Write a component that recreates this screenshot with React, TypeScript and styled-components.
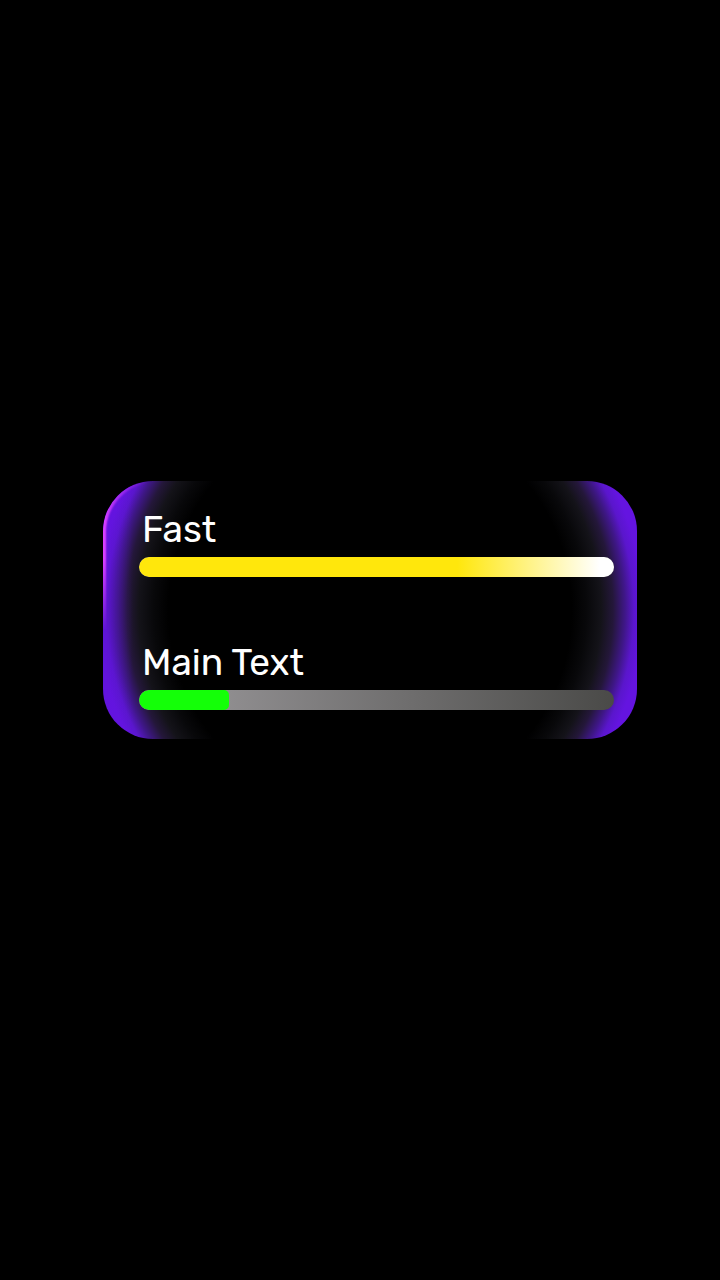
import React from 'react';
import styled, { createGlobalStyle } from 'styled-components';

const GlobalStyle = createGlobalStyle`
  * {
    box-sizing: border-box;
  }

  body {
    margin: 0;
    background-color: #000;
    font-family: Rubik, Roboto, 'Liberation Sans', sans-serif;
  }
`;

const Page = styled.main`
  min-height: 100vh;
  display: flex;
  align-items: center;
  padding: 0 83px 60px 103px;
`;

const Panel = styled.section`
  position: relative;
  flex: 1;
  display: flex;
  flex-direction: column;
  gap: 64px;
  padding: 27px 23px 29px 36px;
  border-radius: 50px;
  background:
    linear-gradient(to right, rgba(96, 20, 220, 0.5), rgba(96, 20, 220, 0) 30px),
    radial-gradient(
      circle farthest-corner,
      #000 68%,
      #08080a 73%,
      #141319 78%,
      #24173a 82%,
      #3f1788 86%,
      #5a16cc 89%,
      #6414e0 92%
    );

  /* pink light on the upper left edge */
  &::before {
    content: '';
    position: absolute;
    inset: 0;
    border-radius: inherit;
    box-shadow: inset 3px 1px 2px #dc40ff;
    mask-image: radial-gradient(ellipse 60px 90px at 0 60px, #000 20%, transparent 100%);
    pointer-events: none;
  }
`;

const Meter = styled.div`
  display: flex;
  flex-direction: column;
  gap: 7px;
`;

const Label = styled.span`
  padding-left: 3px;
  font-size: 37px;
  font-weight: 400;
  line-height: 42px;
  color: #fff;
`;

const Track = styled.div`
  height: 20px;
  border-radius: 10px;
  overflow: hidden;
  background: linear-gradient(to right, #929092 15%, #4a4a48);
`;

const Fill = styled.div<{ $background: string }>`
  height: 100%;
  border-radius: 10px 5px 5px 10px;
  background: ${({ $background }) => $background};
`;

const meters = [
  {
    id: 'fast',
    label: 'Fast',
    value: 100,
    background: 'linear-gradient(to right, #ffe70c 67%, #fff 97%)',
  },
  {
    id: 'main',
    label: 'Main Text',
    value: 19,
    background: '#14ff08',
  },
];

function App() {
  return (
    <>
      <GlobalStyle />
      <Page>
        <Panel>
          {meters.map((meter) => (
            <Meter key={meter.id}>
              <Label id={meter.id}>{meter.label}</Label>
              <Track
                role="progressbar"
                aria-labelledby={meter.id}
                aria-valuemin={0}
                aria-valuemax={100}
                aria-valuenow={meter.value}
              >
                <Fill $background={meter.background} style={{ width: `${meter.value}%` }} />
              </Track>
            </Meter>
          ))}
        </Panel>
      </Page>
    </>
  );
}

export default App;
